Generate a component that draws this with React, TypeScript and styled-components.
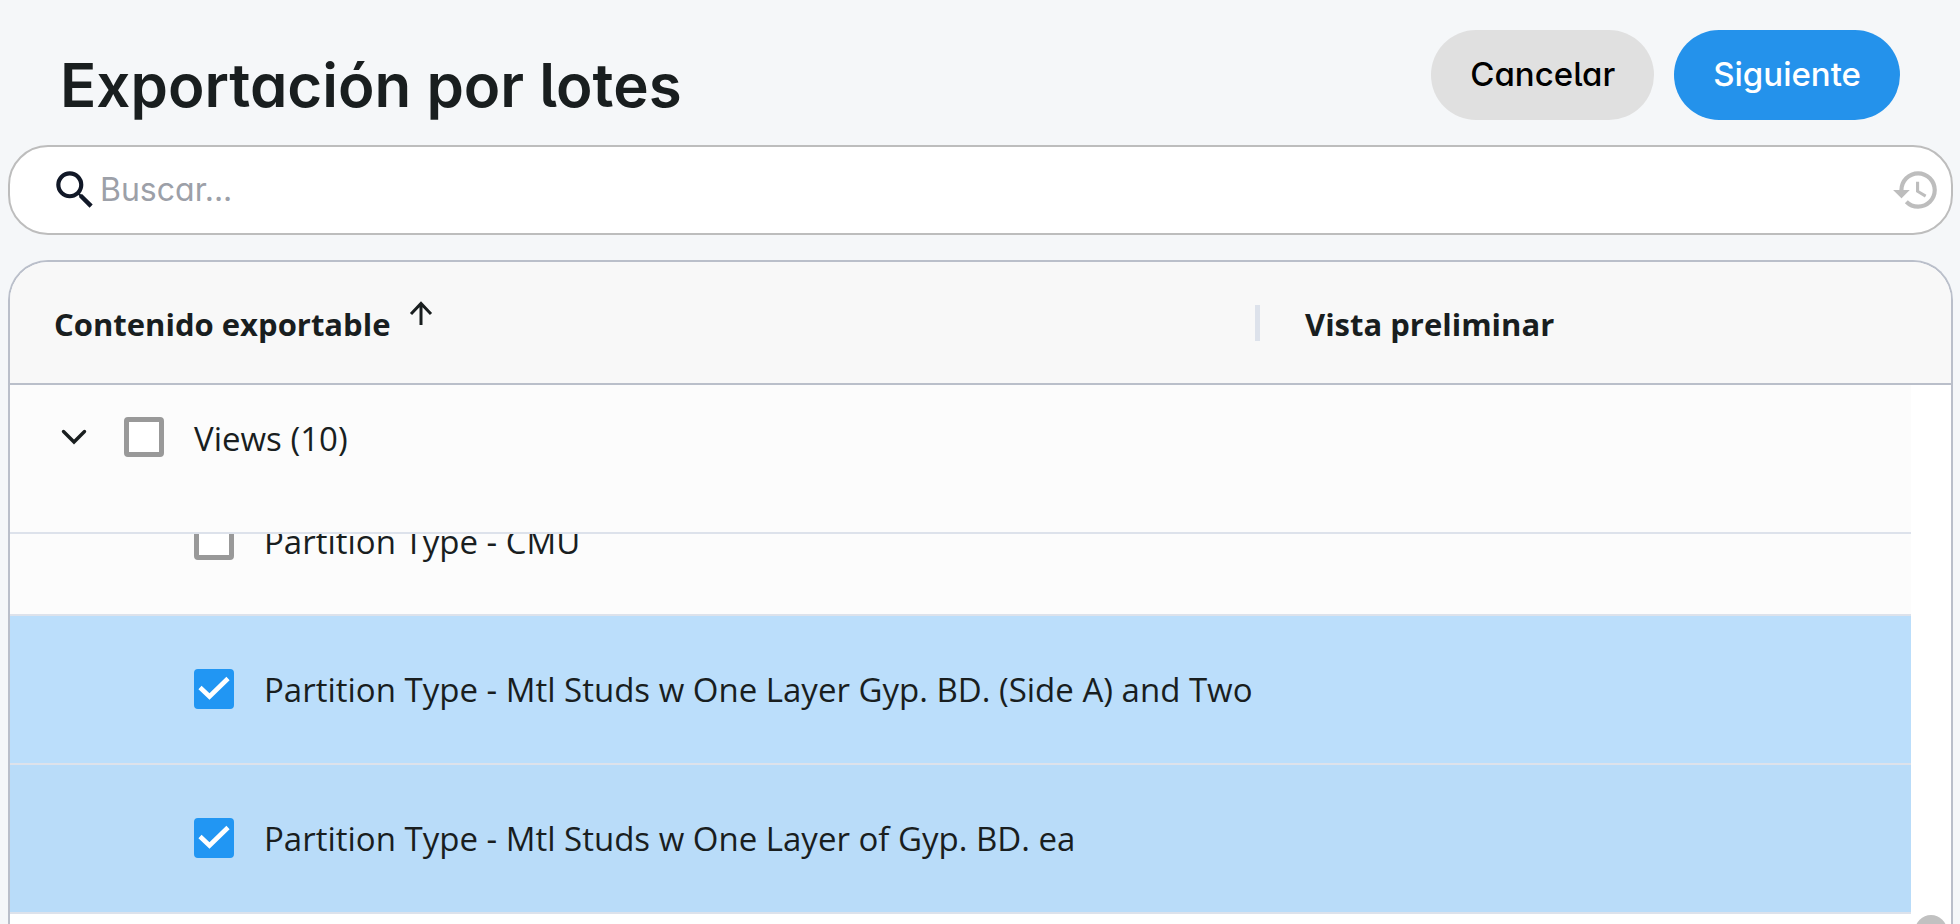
import React, { useState } from "react";
import styled, { createGlobalStyle } from "styled-components";
import { MdHistory, MdSearch } from "react-icons/md";

const GlobalStyle = createGlobalStyle`
  * { box-sizing: border-box; }
  body {
    margin: 0;
    background: #f5f7f9;
    color: #191e1f;
    font-family: "Open Sans", "Noto Sans", sans-serif;
  }
`;

const uiFont = `
  font-family: Inter, "Liberation Sans", sans-serif;
  font-feature-settings: "cv05", "cv11";
`;

const Page = styled.main`
  display: flex;
  flex-direction: column;
  height: 100vh;
  padding: 0 7px 0 8px;
  overflow: hidden;
`;

const Header = styled.header`
  display: flex;
  justify-content: space-between;
  align-items: flex-start;
  padding: 30px 53px 25px 52px;
`;

const Title = styled.h1`
  ${uiFont}
  margin: 0;
  padding-top: 20px;
  font-size: 60px;
  font-weight: 600;
  line-height: 70px;
  white-space: nowrap;
`;

const Actions = styled.div`
  display: flex;
  gap: 20px;
`;

const Button = styled.button<{ $primary?: boolean }>`
  ${uiFont}
  height: 90px;
  padding: 0 39px 2px;
  border: 0;
  border-radius: 45px;
  background: ${(p) => (p.$primary ? "#2492eb" : "#e0e0e0")};
  color: ${(p) => (p.$primary ? "#fff" : "#000")};
  font-size: 33px;
  font-weight: 500;
  cursor: pointer;
`;

const SearchBar = styled.div`
  display: flex;
  flex: none;
  align-items: center;
  height: 90px;
  padding: 0 10px 0 40px;
  border: 2px solid #bdbdbd;
  border-radius: 40px;
  background: #fff;
  color: #111827;
`;

const SearchInput = styled.input`
  ${uiFont}
  flex: 1;
  min-width: 0;
  padding: 0 0 2px;
  border: 0;
  outline: 0;
  background: transparent;
  color: #111827;
  font-size: 32px;
  &::placeholder { color: #9ca0a8; opacity: 1; }
`;

const IconButton = styled.button`
  display: flex;
  padding: 0;
  border: 0;
  background: none;
  color: inherit;
  cursor: pointer;
`;

const HistoryButton = styled(IconButton)`
  color: #bdbdbd;
`;

const Panel = styled.section`
  position: relative;
  flex: 1;
  margin-top: 25px;
  border: 2px solid #babfca;
  border-bottom: 0;
  border-radius: 40px 40px 0 0;
  background: #fff;
  overflow: hidden;
`;

const Table = styled.table`
  width: 100%;
  table-layout: fixed;
  border-collapse: separate;
  border-spacing: 0;
`;

const ContentCol = styled.col``;
const PreviewCol = styled.col`
  width: 652px;
`;
const GutterCol = styled.col`
  width: 40px;
`;

const Th = styled.th`
  height: 123px;
  padding: 0;
  border-bottom: 2px solid #babfca;
  background: #f8f8f8;
  text-align: left;
  font-size: 31px;
  font-weight: 700;
  line-height: 44px;
`;

const HeadLabel = styled.div<{ $inset: number }>`
  display: flex;
  align-items: center;
  gap: 18px;
  height: 44px;
  padding-left: ${(p) => p.$inset}px;
`;

const Divider = styled.span`
  width: 5px;
  height: 36px;
  margin: 0 27px 0 -4px;
  background: #dde2eb;
`;

const SortArrow = styled.svg`
  margin-bottom: 20px;
`;

const Tr = styled.tr<{ $bg: string }>`
  background: ${(p) => p.$bg};
`;

const Td = styled.td`
  padding: 0;
  border-bottom: 2px solid #dde2eb;
`;

const GutterCell = styled.td`
  padding: 0;
  background: #fff;
`;

const RowBody = styled.div<{ $kind: "group" | "item" | "cut" }>`
  display: flex;
  align-items: ${(p) => (p.$kind === "cut" ? "flex-end" : "center")};
  height: ${(p) => (p.$kind === "cut" ? 80 : 147)}px;
  padding: ${(p) =>
    p.$kind === "group" ? "0 0 43px 50px" : p.$kind === "cut" ? "0 0 50px 184px" : "0 0 2px 184px"};
  overflow: hidden;
  font-size: 33px;
  line-height: 48px;
`;

const CheckLabel = styled.label`
  display: flex;
  align-items: center;
  gap: 30px;
  height: 48px;
  white-space: nowrap;
`;

const LabelText = styled.span`
  padding-top: 3px;
`;

const GroupToggle = styled(IconButton)`
  margin-right: 36px;
`;

const CheckBox = styled.span`
  display: grid;
  flex: none;
  > * { grid-area: 1 / 1; }
  > svg { pointer-events: none; }
`;

const CheckInput = styled.input`
  appearance: none;
  width: 40px;
  height: 40px;
  margin: 0;
  border: 5px solid #999;
  border-radius: 4px;
  background: #fff;
  &:checked { border-color: #2196f3; background: #2196f3; }
`;

const ScrollThumb = styled.div`
  position: absolute;
  top: 653px;
  right: 4px;
  width: 32px;
  height: 200px;
  border-radius: 16px;
  background: #c1c1c1;
`;

function Check({ label, initial = false }: { label: string; initial?: boolean }) {
  const [checked, setChecked] = useState(initial);
  return (
    <CheckLabel>
      <CheckBox>
        <CheckInput type="checkbox" checked={checked} onChange={() => setChecked(!checked)} />
        {checked && (
          <svg width="40" height="40" viewBox="0 0 40 40" fill="none" stroke="#fff" strokeWidth="4.6">
            <path d="M6 18.5 15.5 27.5 34 9.500" />
          </svg>
        )}
      </CheckBox>
      <LabelText>{label}</LabelText>
    </CheckLabel>
  );
}

const items = [
  { label: "Partition Type - CMU", checked: false, cut: true, bg: "#fcfcfc" },
  {
    label: "Partition Type - Mtl Studs w One Layer Gyp. BD. (Side A) and Two",
    checked: true,
    cut: false,
    bg: "#bbdefb",
  },
  { label: "Partition Type - Mtl Studs w One Layer of Gyp. BD. ea", checked: true, cut: false, bg: "#b9dcf9" },
];

export default function App() {
  return (
    <>
      <GlobalStyle />
      <Page>
        <Header>
          <Title>Exportación por lotes</Title>
          <Actions>
            <Button type="button">Cancelar</Button>
            <Button type="button" $primary>
              Siguiente
            </Button>
          </Actions>
        </Header>
        <SearchBar role="search">
          <MdSearch size={50} />
          <SearchInput type="text" placeholder="Buscar..." aria-label="Buscar" />
          <HistoryButton type="button" aria-label="Historial">
            <MdHistory size={50} />
          </HistoryButton>
        </SearchBar>
        <Panel>
          <Table>
            <colgroup>
              <ContentCol />
              <PreviewCol />
              <GutterCol />
            </colgroup>
            <thead>
              <tr>
                <Th scope="col" aria-sort="ascending">
                  <HeadLabel $inset={44}>
                    <LabelText>Contenido exportable</LabelText>
                    <SortArrow width="24" height="24" viewBox="0 0 24 24" fill="none" stroke="#191e1f" strokeWidth="3">
                      <path d="M12 24V2.5M2 13 12 2.500 22 13" />
                    </SortArrow>
                  </HeadLabel>
                </Th>
                <Th scope="col" colSpan={2}>
                  <HeadLabel $inset={0}>
                    <Divider />
                    <LabelText>Vista preliminar</LabelText>
                  </HeadLabel>
                </Th>
              </tr>
            </thead>
            <tbody>
              <Tr $bg="#fcfcfc">
                <Td>
                  <RowBody $kind="group">
                    <GroupToggle type="button" aria-label="Contraer Views">
                      <svg
                        width="28"
                        height="28"
                        viewBox="0 0 28 28"
                        fill="none"
                        stroke="#191e1f"
                        strokeWidth="3.4"
                        strokeLinecap="round"
                      >
                        <path d="M3.500 8.500 14 19 24.500 8.500" />
                      </svg>
                    </GroupToggle>
                    <Check label="Views (10)" />
                  </RowBody>
                </Td>
                <Td />
                <GutterCell />
              </Tr>
              {items.map((item) => (
                <Tr key={item.label} $bg={item.bg}>
                  <Td>
                    <RowBody $kind={item.cut ? "cut" : "item"}>
                      <Check label={item.label} initial={item.checked} />
                    </RowBody>
                  </Td>
                  <Td />
                  <GutterCell />
                </Tr>
              ))}
            </tbody>
          </Table>
          <ScrollThumb />
        </Panel>
      </Page>
    </>
  );
}
